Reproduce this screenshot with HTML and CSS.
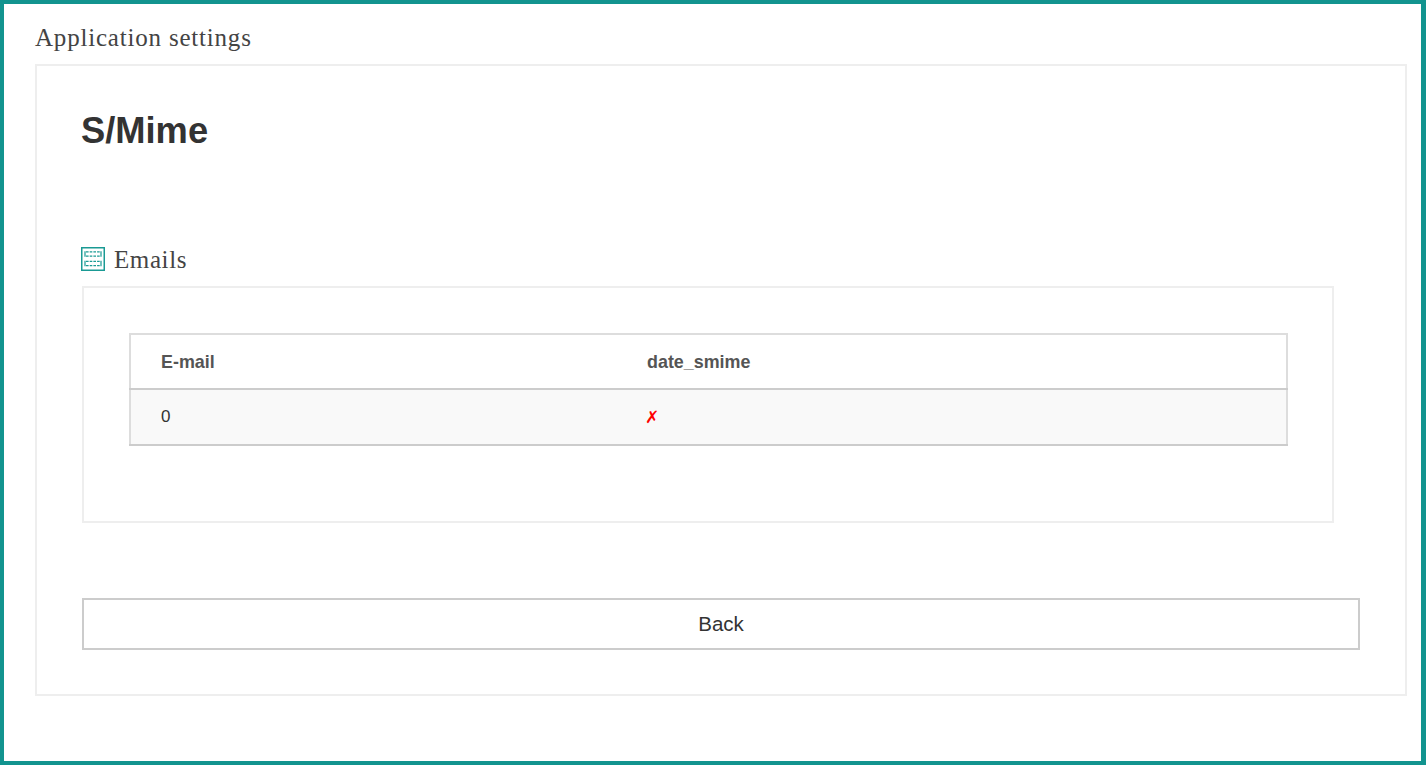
FILE: index.html
```html
<!DOCTYPE html>
<html lang="en">
<head>
  <meta charset="UTF-8" />
  <meta name="viewport" content="width=device-width, initial-scale=1.0"/>
  <title>Application settings</title>
  <link rel="stylesheet" href="styles.css">
</head>
<body>

  <div class="frame">
    <h2 class="app-title">Application settings</h2>

    <div class="panel">
      <h1>S/Mime</h1>

      <div class="section-title">
        <svg class="section-icon" width="24" height="24" viewBox="0 0 24 24" fill="none" stroke="#1a9a94">
          <rect x="0.75" y="0.75" width="22.5" height="22.5" stroke-width="1.5"/>
          <path d="M5 4.8h14M5 9.2h14M5 14.3h14M5 18.7h14" stroke-width="1.3" stroke-dasharray="2.6 1.1"/>
          <path d="M4 4.2v5.6M20 4.2v5.6M4 13.7v5.6M20 13.7v5.6" stroke-width="1.2"/>
        </svg>
        <span class="section-label">Emails</span>
      </div>

      <div class="box">
        <table class="grid">
          <thead>
            <tr>
              <th class="col-email">E-mail</th>
              <th>date_smime</th>
            </tr>
          </thead>
          <tbody>
            <tr>
              <td>0</td>
              <td><span class="cross">✗</span></td>
            </tr>
          </tbody>
        </table>
      </div>

      <button class="back">Back</button>
    </div>
  </div>

</body>
</html>
```

FILE: styles.css
```css
html, body {
  margin: 0;
  height: 100%;
}

body {
  font-family: "Liberation Sans", Arial, sans-serif;
  background-color: #fff;
  color: #333;
}

.frame {
  height: 765px;
  border: 4px solid #12948f;
  border-right-width: 5px;
  padding: 18px 14px 0 31px;
  box-sizing: border-box;
}

.app-title {
  margin: 0 0 10px 0;
  font-family: "Liberation Serif", Georgia, serif;
  font-size: 25px;
  line-height: 32px;
  font-weight: normal;
  letter-spacing: 0.8px;
  color: #444;
}

.panel {
  height: 632px;
  border: 2px solid #eee;
  padding: 45px;
  box-sizing: border-box;
}

h1 {
  margin: 0 0 96px -1px;
  font-size: 36.3px;
  line-height: 40px;
  font-weight: bold;
  color: #333;
}

.section-title {
  display: flex;
  align-items: center;
  gap: 9px;
  height: 24px;
  margin-bottom: 15px;
  margin-left: -1px;
  font-family: "Liberation Serif", Georgia, serif;
  font-size: 25px;
  letter-spacing: 0.6px;
  color: #444;
}

.section-label {
  padding-top: 2px;
}

.box {
  width: 1252px;
  height: 237px;
  border: 2px solid #eee;
  padding: 45px;
  box-sizing: border-box;
  margin-bottom: 75px;
}

.grid {
  width: 1159px;
  border-collapse: collapse;
  border: 2px solid #ddd;
  border-bottom: 2px solid #ccc;
  font-size: 17px;
}

.grid th {
  height: 51px;
  padding: 2px 30px 0;
  text-align: left;
  font-size: 17.9px;
  font-weight: bold;
  color: #555;
  border-bottom: 2px solid #ccc;
}

.grid td {
  height: 54px;
  padding: 0 30px;
  background-color: #f9f9f9;
  color: #333;
}

.col-email {
  width: 426px;
}

.cross {
  margin-left: -2px;
  font-family: "DejaVu Sans", sans-serif;
  color: #f00;
  font-size: 17px;
}

.back {
  display: block;
  width: 100%;
  height: 52px;
  background-color: #fff;
  border: 2px solid #ccc;
  font-family: "Liberation Sans", Arial, sans-serif;
  font-size: 20.5px;
  color: #333;
  cursor: pointer;
}
```
